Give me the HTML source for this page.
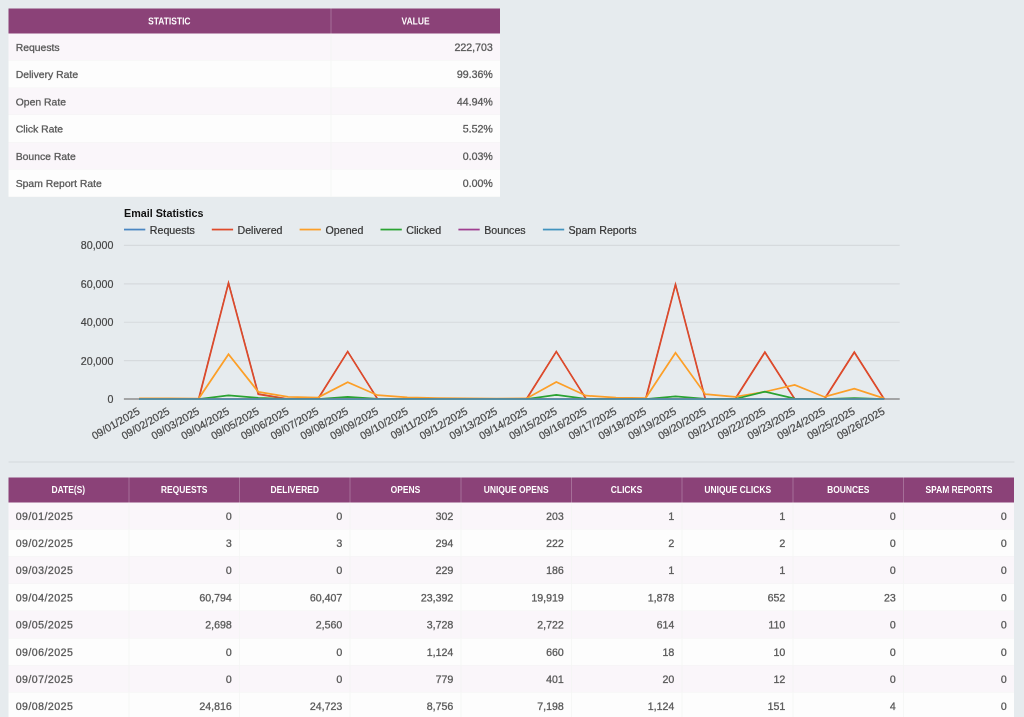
<!DOCTYPE html>
<html lang="en">
<head>
<meta charset="utf-8">
<title>Email Statistics</title>
<style>
*{box-sizing:border-box;margin:0;padding:0}
html,body{width:1024px;height:717px;overflow:hidden;background:#e6ebee}
body{position:relative;font-family:"Liberation Sans",Arial,sans-serif;color:#5c5c5c}
#page{will-change:transform;position:absolute;left:0;top:0;width:2048.00px;height:1434.00px;transform:scale(0.5);transform-origin:0 0;font-size:20.80px}
table{position:absolute;border-collapse:separate;border-spacing:0;table-layout:fixed;white-space:nowrap}
thead tr{background:#8b4278;color:#fff;font-size:19.40px}
th{font-weight:bold;text-align:center;border-left:2.00px solid rgba(255,255,255,.24);padding:0}
th:first-child{border-left:0}
tbody tr:nth-child(odd){background:#faf6fa}
tbody tr:nth-child(even){background:#fdfdfd}
td{padding:0 14.40px;border-left:2.00px solid rgba(244,245,244,.75);border-bottom:1.00px solid rgba(243,244,243,.8)}
td:first-child,th:first-child{border-left:0}
td span{position:relative;top:1.20px;-webkit-text-stroke:0.64px #5c5c5c}
th span{display:inline-block;transform:scaleX(0.872);position:relative;top:0.00px}
td.l{text-align:left}
td.r{text-align:right;font-size:21.20px}
td.d{font-size:21.20px;letter-spacing:0.92px}
.sep{position:absolute;left:17.00px;top:922.50px;width:2011.60px;height:2.00px;background:#d5d9dc}
.chart{position:absolute;left:0;top:0}
.chart text{font-family:"Liberation Sans",Arial,sans-serif}
.ct{font-size:10.75px;font-weight:bold;fill:#111}
.lg{font-size:10.67px;fill:#333;stroke:#333;stroke-width:.2px}
.ax{font-size:10.67px;fill:#444;stroke:#444;stroke-width:.2px}
</style>
</head>
<body>
<div id="page">
<table style="left:17.00px;top:17.00px;width:983.00px">
<colgroup><col style="width:644.00px"><col style="width:339.00px"></colgroup>
<thead><tr style="height:50.00px">
<th><span>STATISTIC</span></th>
<th><span>VALUE</span></th>
</tr></thead>
<tbody>
<tr style="height:54.48px">
<td class="l"><span>Requests</span></td>
<td class="r"><span>222,703</span></td>
</tr>
<tr style="height:54.48px">
<td class="l"><span>Delivery Rate</span></td>
<td class="r"><span>99.36%</span></td>
</tr>
<tr style="height:54.48px">
<td class="l"><span>Open Rate</span></td>
<td class="r"><span>44.94%</span></td>
</tr>
<tr style="height:54.48px">
<td class="l"><span>Click Rate</span></td>
<td class="r"><span>5.52%</span></td>
</tr>
<tr style="height:54.48px">
<td class="l"><span>Bounce Rate</span></td>
<td class="r"><span>0.03%</span></td>
</tr>
<tr style="height:54.48px">
<td class="l"><span>Spam Report Rate</span></td>
<td class="r"><span>0.00%</span></td>
</tr>
</tbody></table>
<svg class="chart" width="2048" height="1434" viewBox="0 0 1024 717"  role="img" aria-label="Email Statistics line chart">
<text x="124.0" y="216.8" class="ct">Email Statistics</text>
<g class="legend">
<line x1="124.0" y1="229.55" x2="145.3" y2="229.55" stroke="#4a86c2" stroke-width="1.75"/>
<text x="149.8" y="233.5" class="lg">Requests</text>
<line x1="211.8" y1="229.55" x2="233.1" y2="229.55" stroke="#df4a2a" stroke-width="1.75"/>
<text x="237.5" y="233.5" class="lg">Delivered</text>
<line x1="299.6" y1="229.55" x2="320.9" y2="229.55" stroke="#fc9f28" stroke-width="1.75"/>
<text x="325.5" y="233.5" class="lg">Opened</text>
<line x1="380.5" y1="229.55" x2="401.8" y2="229.55" stroke="#2aa332" stroke-width="1.75"/>
<text x="406.2" y="233.5" class="lg">Clicked</text>
<line x1="458.4" y1="229.55" x2="479.7" y2="229.55" stroke="#9f3e90" stroke-width="1.75"/>
<text x="484.2" y="233.5" class="lg">Bounces</text>
<line x1="542.9" y1="229.55" x2="564.2" y2="229.55" stroke="#4193be" stroke-width="1.75"/>
<text x="568.4" y="233.5" class="lg">Spam Reports</text>
</g>
<g class="grid">
<line x1="123.9" y1="360.65" x2="899.7" y2="360.65" stroke="#d6dadd" stroke-width="1.2"/>
<line x1="123.9" y1="322.25" x2="899.7" y2="322.25" stroke="#d6dadd" stroke-width="1.2"/>
<line x1="123.9" y1="283.85" x2="899.7" y2="283.85" stroke="#d6dadd" stroke-width="1.2"/>
<line x1="123.9" y1="245.45" x2="899.7" y2="245.45" stroke="#d6dadd" stroke-width="1.2"/>
<line x1="123.9" y1="399.05" x2="899.7" y2="399.05" stroke="#8c8c8c" stroke-width="1.4"/>
</g>
<g class="yaxis">
<text x="113.4" y="403.00" class="ax" text-anchor="end">0</text>
<text x="113.4" y="364.60" class="ax" text-anchor="end">20,000</text>
<text x="113.4" y="326.20" class="ax" text-anchor="end">40,000</text>
<text x="113.4" y="287.80" class="ax" text-anchor="end">60,000</text>
<text x="113.4" y="249.40" class="ax" text-anchor="end">80,000</text>
</g>
<g class="series">
<polyline fill="none" stroke="#4a86c2" stroke-width="0.90" stroke-linejoin="miter" points="139.10,399.05 168.90,399.04 198.70,399.05 228.50,282.33 258.30,393.87 288.10,399.05 317.90,399.05 347.70,351.40 377.50,398.93 407.30,399.05 437.10,399.05 466.90,399.05 496.70,399.05 526.50,399.05 556.30,351.43 586.10,398.97 615.90,399.05 645.70,399.05 675.50,283.95 705.30,398.90 735.10,399.05 764.90,351.97 794.70,398.99 824.50,399.05 854.30,351.97 884.10,399.01"/>
<polyline fill="none" stroke="#df4a2a" stroke-width="1.75" stroke-linejoin="miter" points="139.10,399.05 168.90,399.04 198.70,399.05 228.50,283.07 258.30,394.13 288.10,399.05 317.90,399.05 347.70,351.58 377.50,398.93 407.30,399.05 437.10,399.05 466.90,399.05 496.70,399.05 526.50,399.05 556.30,351.63 586.10,398.97 615.90,399.05 645.70,399.05 675.50,284.62 705.30,398.90 735.10,399.05 764.90,352.16 794.70,398.99 824.50,399.05 854.30,352.16 884.10,399.01"/>
<polyline fill="none" stroke="#fc9f28" stroke-width="1.75" stroke-linejoin="miter" points="139.10,398.47 168.90,398.49 198.70,398.61 228.50,354.14 258.30,391.89 288.10,396.89 317.90,397.55 347.70,382.24 377.50,395.21 407.30,397.42 437.10,398.05 466.90,398.42 496.70,398.55 526.50,398.47 556.30,381.96 586.10,395.69 615.90,397.71 645.70,398.09 675.50,352.78 705.30,394.15 735.10,396.84 764.90,391.75 794.70,384.94 824.50,396.94 854.30,388.68 884.10,398.38"/>
<polyline fill="none" stroke="#2aa332" stroke-width="1.75" stroke-linejoin="miter" points="139.10,399.05 168.90,399.05 198.70,399.05 228.50,395.44 258.30,397.87 288.10,399.02 317.90,399.01 347.70,396.89 377.50,398.82 407.30,398.99 437.10,399.03 466.90,399.04 496.70,399.04 526.50,399.04 556.30,394.83 586.10,398.76 615.90,399.01 645.70,399.03 675.50,396.27 705.30,398.82 735.10,398.99 764.90,391.75 794.70,398.70 824.50,399.01 854.30,398.05 884.10,399.01"/>
<polyline fill="none" stroke="#9f3e90" stroke-width="1.20" stroke-linejoin="miter" points="139.10,399.05 168.90,399.05 198.70,399.05 228.50,399.01 258.30,399.05 288.10,399.05 317.90,399.05 347.70,399.04 377.50,399.05 407.30,399.05 437.10,399.05 466.90,399.05 496.70,399.05 526.50,399.05 556.30,399.04 586.10,399.05 615.90,399.05 645.70,399.05 675.50,399.01 705.30,399.05 735.10,399.05 764.90,399.04 794.70,399.05 824.50,399.05 854.30,399.04 884.10,399.05"/>
<polyline fill="none" stroke="#5291a8" stroke-width="1.75" stroke-linejoin="miter" points="139.10,399.05 168.90,399.05 198.70,399.05 228.50,399.05 258.30,399.05 288.10,399.05 317.90,399.05 347.70,399.05 377.50,399.05 407.30,399.05 437.10,399.05 466.90,399.05 496.70,399.05 526.50,399.05 556.30,399.05 586.10,399.05 615.90,399.05 645.70,399.05 675.50,399.05 705.30,399.05 735.10,399.05 764.90,399.05 794.70,399.05 824.50,399.05 854.30,399.05 884.10,399.05"/>
</g>
<g class="xaxis">
<text x="140.65" y="413.30" class="ax" text-anchor="end" transform="rotate(-30 140.65 413.30)">09/01/2025</text>
<text x="170.45" y="413.30" class="ax" text-anchor="end" transform="rotate(-30 170.45 413.30)">09/02/2025</text>
<text x="200.25" y="413.30" class="ax" text-anchor="end" transform="rotate(-30 200.25 413.30)">09/03/2025</text>
<text x="230.05" y="413.30" class="ax" text-anchor="end" transform="rotate(-30 230.05 413.30)">09/04/2025</text>
<text x="259.85" y="413.30" class="ax" text-anchor="end" transform="rotate(-30 259.85 413.30)">09/05/2025</text>
<text x="289.65" y="413.30" class="ax" text-anchor="end" transform="rotate(-30 289.65 413.30)">09/06/2025</text>
<text x="319.45" y="413.30" class="ax" text-anchor="end" transform="rotate(-30 319.45 413.30)">09/07/2025</text>
<text x="349.25" y="413.30" class="ax" text-anchor="end" transform="rotate(-30 349.25 413.30)">09/08/2025</text>
<text x="379.05" y="413.30" class="ax" text-anchor="end" transform="rotate(-30 379.05 413.30)">09/09/2025</text>
<text x="408.85" y="413.30" class="ax" text-anchor="end" transform="rotate(-30 408.85 413.30)">09/10/2025</text>
<text x="438.65" y="413.30" class="ax" text-anchor="end" transform="rotate(-30 438.65 413.30)">09/11/2025</text>
<text x="468.45" y="413.30" class="ax" text-anchor="end" transform="rotate(-30 468.45 413.30)">09/12/2025</text>
<text x="498.25" y="413.30" class="ax" text-anchor="end" transform="rotate(-30 498.25 413.30)">09/13/2025</text>
<text x="528.05" y="413.30" class="ax" text-anchor="end" transform="rotate(-30 528.05 413.30)">09/14/2025</text>
<text x="557.85" y="413.30" class="ax" text-anchor="end" transform="rotate(-30 557.85 413.30)">09/15/2025</text>
<text x="587.65" y="413.30" class="ax" text-anchor="end" transform="rotate(-30 587.65 413.30)">09/16/2025</text>
<text x="617.45" y="413.30" class="ax" text-anchor="end" transform="rotate(-30 617.45 413.30)">09/17/2025</text>
<text x="647.25" y="413.30" class="ax" text-anchor="end" transform="rotate(-30 647.25 413.30)">09/18/2025</text>
<text x="677.05" y="413.30" class="ax" text-anchor="end" transform="rotate(-30 677.05 413.30)">09/19/2025</text>
<text x="706.85" y="413.30" class="ax" text-anchor="end" transform="rotate(-30 706.85 413.30)">09/20/2025</text>
<text x="736.65" y="413.30" class="ax" text-anchor="end" transform="rotate(-30 736.65 413.30)">09/21/2025</text>
<text x="766.45" y="413.30" class="ax" text-anchor="end" transform="rotate(-30 766.45 413.30)">09/22/2025</text>
<text x="796.25" y="413.30" class="ax" text-anchor="end" transform="rotate(-30 796.25 413.30)">09/23/2025</text>
<text x="826.05" y="413.30" class="ax" text-anchor="end" transform="rotate(-30 826.05 413.30)">09/24/2025</text>
<text x="855.85" y="413.30" class="ax" text-anchor="end" transform="rotate(-30 855.85 413.30)">09/25/2025</text>
<text x="885.65" y="413.30" class="ax" text-anchor="end" transform="rotate(-30 885.65 413.30)">09/26/2025</text>
</g>
</svg>
<div class="sep"></div>
<table style="left:17.00px;top:955.00px;width:2011.00px">
<colgroup><col style="width:240.00px"><col style="width:221.00px"><col style="width:221.00px"><col style="width:222.00px"><col style="width:221.00px"><col style="width:221.00px"><col style="width:222.00px"><col style="width:221.00px"><col style="width:222.00px"></colgroup>
<thead><tr style="height:49.70px">
<th><span>DATE(S)</span></th>
<th><span>REQUESTS</span></th>
<th><span>DELIVERED</span></th>
<th><span>OPENS</span></th>
<th><span>UNIQUE OPENS</span></th>
<th><span>CLICKS</span></th>
<th><span>UNIQUE CLICKS</span></th>
<th><span>BOUNCES</span></th>
<th><span>SPAM REPORTS</span></th>
</tr></thead>
<tbody>
<tr style="height:54.40px">
<td class="l d"><span>09/01/2025</span></td>
<td class="r"><span>0</span></td>
<td class="r"><span>0</span></td>
<td class="r"><span>302</span></td>
<td class="r"><span>203</span></td>
<td class="r"><span>1</span></td>
<td class="r"><span>1</span></td>
<td class="r"><span>0</span></td>
<td class="r"><span>0</span></td>
</tr>
<tr style="height:54.40px">
<td class="l d"><span>09/02/2025</span></td>
<td class="r"><span>3</span></td>
<td class="r"><span>3</span></td>
<td class="r"><span>294</span></td>
<td class="r"><span>222</span></td>
<td class="r"><span>2</span></td>
<td class="r"><span>2</span></td>
<td class="r"><span>0</span></td>
<td class="r"><span>0</span></td>
</tr>
<tr style="height:54.40px">
<td class="l d"><span>09/03/2025</span></td>
<td class="r"><span>0</span></td>
<td class="r"><span>0</span></td>
<td class="r"><span>229</span></td>
<td class="r"><span>186</span></td>
<td class="r"><span>1</span></td>
<td class="r"><span>1</span></td>
<td class="r"><span>0</span></td>
<td class="r"><span>0</span></td>
</tr>
<tr style="height:54.40px">
<td class="l d"><span>09/04/2025</span></td>
<td class="r"><span>60,794</span></td>
<td class="r"><span>60,407</span></td>
<td class="r"><span>23,392</span></td>
<td class="r"><span>19,919</span></td>
<td class="r"><span>1,878</span></td>
<td class="r"><span>652</span></td>
<td class="r"><span>23</span></td>
<td class="r"><span>0</span></td>
</tr>
<tr style="height:54.40px">
<td class="l d"><span>09/05/2025</span></td>
<td class="r"><span>2,698</span></td>
<td class="r"><span>2,560</span></td>
<td class="r"><span>3,728</span></td>
<td class="r"><span>2,722</span></td>
<td class="r"><span>614</span></td>
<td class="r"><span>110</span></td>
<td class="r"><span>0</span></td>
<td class="r"><span>0</span></td>
</tr>
<tr style="height:54.40px">
<td class="l d"><span>09/06/2025</span></td>
<td class="r"><span>0</span></td>
<td class="r"><span>0</span></td>
<td class="r"><span>1,124</span></td>
<td class="r"><span>660</span></td>
<td class="r"><span>18</span></td>
<td class="r"><span>10</span></td>
<td class="r"><span>0</span></td>
<td class="r"><span>0</span></td>
</tr>
<tr style="height:54.40px">
<td class="l d"><span>09/07/2025</span></td>
<td class="r"><span>0</span></td>
<td class="r"><span>0</span></td>
<td class="r"><span>779</span></td>
<td class="r"><span>401</span></td>
<td class="r"><span>20</span></td>
<td class="r"><span>12</span></td>
<td class="r"><span>0</span></td>
<td class="r"><span>0</span></td>
</tr>
<tr style="height:54.40px">
<td class="l d"><span>09/08/2025</span></td>
<td class="r"><span>24,816</span></td>
<td class="r"><span>24,723</span></td>
<td class="r"><span>8,756</span></td>
<td class="r"><span>7,198</span></td>
<td class="r"><span>1,124</span></td>
<td class="r"><span>151</span></td>
<td class="r"><span>4</span></td>
<td class="r"><span>0</span></td>
</tr>
</tbody></table>
</div>
</body>
</html>
